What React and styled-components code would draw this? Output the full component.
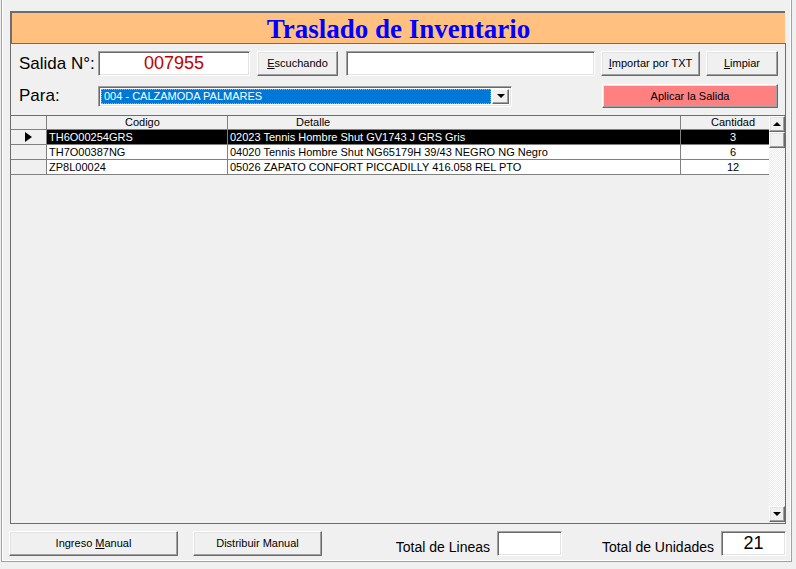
import React from 'react'
import styled, { createGlobalStyle } from 'styled-components'

// Estilos globales
const GlobalStyle = createGlobalStyle`
  html, body { margin: 0; padding: 0; background: #f0f0f0; }
  body { font-family: "Liberation Sans", Arial, sans-serif; }
  * { box-sizing: border-box; }
`

const Ventana = styled.div`
  width: 796px;
  height: 569px;
  overflow: hidden;
  background: #f0f0f0;
`

const Marco = styled.div`
  margin-left: 1px;
  width: 791px;
  height: 562px;
  border: 1px solid #a0a0a0;
  border-top: none;
  box-shadow: inset 1px 0 0 #fff, inset -1px -1px 0 #fff;
  padding: 11px 0 0 8px;
  display: flex;
  flex-direction: column;
`

const Titulo = styled.div`
  width: 775px;
  height: 32px;
  border-top: 2px solid #6d6d6d;
  border-left: 2px solid #6d6d6d;
  background: #ffc080;
  display: flex;
  align-items: center;
  justify-content: center;
  font-family: "Liberation Serif", "Times New Roman", serif;
  font-weight: bold;
  font-size: 27px;
  color: #0000ff;
  padding-top: 2px;
`

const Panel = styled.div`
  width: 776px;
  height: 481px;
  border: 1px solid #6d6d6d;
  display: flex;
  flex-direction: column;
  padding-top: 7px;
`

const Fila = styled.div`
  display: flex;
  align-items: center;
  height: ${(p) => p.alto}px;
  margin-top: ${(p) => p.arriba || 0}px;
  padding-left: 8px;
  padding-right: 6px;
`

const Etiqueta = styled.div`
  width: 79px;
  font-size: 17px;
  color: #000;
`

const Caja = styled.div`
  width: ${(p) => p.ancho}px;
  height: ${(p) => p.alto || 25}px;
  margin-left: ${(p) => p.izq || 0}px;
  background: #fff;
  border-top: 1px solid #a0a0a0;
  border-left: 1px solid #a0a0a0;
  border-right: 1px solid #fff;
  border-bottom: 1px solid #fff;
  box-shadow: inset 1px 1px 0 #696969, inset -1px -1px 0 #e3e3e3;
  display: flex;
  align-items: center;
  justify-content: center;
  font-size: ${(p) => p.letra || 18}px;
  color: ${(p) => p.color || '#000'};
`

const Boton = styled.div`
  width: ${(p) => p.ancho}px;
  height: ${(p) => p.alto || 25}px;
  margin-left: ${(p) => p.izq || 0}px;
  background: ${(p) => p.fondo || '#f0f0f0'};
  border-top: 1px solid #fff;
  border-left: 1px solid #fff;
  border-right: 1px solid #696969;
  border-bottom: 1px solid #696969;
  box-shadow: inset -1px -1px 0 #a0a0a0, inset 1px 1px 0 #e3e3e3;
  display: flex;
  align-items: center;
  justify-content: center;
  font-size: 11px;
  color: #000;
  padding-bottom: 1px;

  u { text-decoration: underline; text-underline-offset: 1px; }
`

const Combo = styled.div`
  width: 414px;
  height: 21px;
  background: #fff;
  border-top: 1px solid #a0a0a0;
  border-left: 1px solid #a0a0a0;
  border-right: 1px solid #fff;
  border-bottom: 1px solid #fff;
  box-shadow: inset 1px 1px 0 #696969, inset -1px -1px 0 #e3e3e3;
  display: flex;
  padding: 2px;
  gap: 1px;
`

const Seleccion = styled.div`
  flex: 1;
  background: #0078d7;
  border: 1px dotted #ff9c1c;
  color: #fff;
  font-size: 11px;
  line-height: 13px;
  padding-left: 2px;
  white-space: nowrap;
`

const BotonCombo = styled.div`
  width: 17px;
  background: #f0f0f0;
  border-top: 1px solid #fff;
  border-left: 1px solid #fff;
  border-right: 1px solid #696969;
  border-bottom: 1px solid #696969;
  box-shadow: inset -1px -1px 0 #a0a0a0;
  display: flex;
  align-items: center;
  justify-content: center;
`

const Flecha = styled.div`
  width: 0;
  height: 0;
  border-left: 4px solid transparent;
  border-right: 4px solid transparent;
  ${(p) =>
    p.arriba
      ? 'border-bottom: 4px solid #000;'
      : 'border-top: 4px solid #000;'}
`

const Rejilla = styled.div`
  flex: 1;
  margin-top: 7px;
  border-top: 1px solid #6d6d6d;
  display: flex;
  min-height: 0;
`

const Datos = styled.div`
  flex: 1;
  display: flex;
  flex-direction: column;
`

const FilaDato = styled.div`
  display: flex;
  height: ${(p) => (p.cabecera ? 14 : 15)}px;
`

const Celda = styled.div`
  width: ${(p) => p.ancho}px;
  height: 100%;
  border-right: ${(p) => (p.ultima ? 'none' : '1px solid #808080')};
  border-bottom: 1px solid #808080;
  background: ${(p) => (p.cabecera || p.fila ? '#f0f0f0' : p.activa ? '#000' : '#fff')};
  color: ${(p) => (p.activa && !p.fila ? '#fff' : '#000')};
  font-size: 11px;
  line-height: ${(p) => (p.cabecera ? 13 : 14)}px;
  white-space: nowrap;
  overflow: hidden;
  padding-left: ${(p) => p.pad || 2}px;
  display: flex;
  align-items: center;
`

const Texto = styled.span`
  display: block;
  width: 100%;
  text-align: ${(p) => p.alinear || 'left'};
`

const Barra = styled.div`
  width: 16px;
  display: flex;
  flex-direction: column;
  padding-bottom: 1px;
`

const BotonBarra = styled.div`
  height: 16px;
  background: #f0f0f0;
  border-top: 1px solid #fff;
  border-left: 1px solid #fff;
  border-right: 1px solid #696969;
  border-bottom: 1px solid #696969;
  box-shadow: inset -1px -1px 0 #a0a0a0, inset 1px 1px 0 #e3e3e3;
  display: flex;
  align-items: center;
  justify-content: center;
`

const Pista = styled.div`
  flex: 1;
  background-color: #f0f0f0;
  background-image: repeating-conic-gradient(#ffffff 0 25%, #ebebeb 0 50%);
  background-size: 2px 2px;
`

const PiePagina = styled.div`
  display: flex;
  align-items: center;
  height: 25px;
  margin-top: 7px;
  margin-left: -1px;
  width: 777px;
`

const Grupo = styled.div`
  width: ${(p) => p.ancho}px;
  display: flex;
  justify-content: flex-end;
  align-items: center;
  gap: 7px;
`

const EtiquetaPie = styled.div`
  font-size: 14px;
  color: #000;
  padding-top: 6px;
`

const filas = [
  { codigo: 'TH6O00254GRS', detalle: '02023 Tennis Hombre Shut GV1743 J GRS Gris', cantidad: '3', activa: true },
  { codigo: 'TH7O00387NG', detalle: '04020 Tennis Hombre Shut NG65179H 39/43 NEGRO NG Negro', cantidad: '6' },
  { codigo: 'ZP8L00024', detalle: '05026 ZAPATO CONFORT PICCADILLY 416.058 REL PTO', cantidad: '12' },
]

const Marcador = () => (
  <svg width="8" height="10" viewBox="0 0 8 10">
    <polygon points="0,0 7,5 0,10" fill="#000" />
  </svg>
)

const App = () => {
  return (
    <Ventana>
      <GlobalStyle />
      <Marco>
        <Titulo>Traslado de Inventario</Titulo>
        <Panel>
          <Fila alto={25}>
            <Etiqueta>Salida N°:</Etiqueta>
            <Caja ancho={152} color="#c00000">007955</Caja>
            <Boton ancho={81} izq={7}>
              <span><u>E</u>scuchando</span>
            </Boton>
            <Caja ancho={249} izq={8} />
            <Boton ancho={99} izq={6}>
              <span><u>I</u>mportar por TXT</span>
            </Boton>
            <Boton ancho={72} izq={6}>
              <span><u>L</u>impiar</span>
            </Boton>
          </Fila>
          <Fila alto={24} arriba={8}>
            <Etiqueta>Para:</Etiqueta>
            <Combo>
              <Seleccion>004 - CALZAMODA PALMARES</Seleccion>
              <BotonCombo>
                <Flecha />
              </BotonCombo>
            </Combo>
            <Boton ancho={176} alto={24} izq={90} fondo="#ff8080">
              Aplicar la Salida
            </Boton>
          </Fila>
          <Rejilla>
            <Datos>
              <FilaDato cabecera>
                <Celda cabecera ancho={36} />
                <Celda cabecera ancho={181} pad={78}>Codigo</Celda>
                <Celda cabecera ancho={453} pad={68}>Detalle</Celda>
                <Celda cabecera ancho={88} pad={30} ultima>Cantidad</Celda>
              </FilaDato>
              {filas.map((f) => (
                <FilaDato key={f.codigo}>
                  <Celda fila ancho={36} pad={14} activa={f.activa}>
                    {f.activa && <Marcador />}
                  </Celda>
                  <Celda ancho={181} activa={f.activa}>{f.codigo}</Celda>
                  <Celda ancho={453} activa={f.activa}>{f.detalle}</Celda>
                  <Celda ancho={88} pad={16} activa={f.activa} ultima>
                    <Texto alinear="center">{f.cantidad}</Texto>
                  </Celda>
                </FilaDato>
              ))}
            </Datos>
            <Barra>
              <BotonBarra>
                <Flecha arriba />
              </BotonBarra>
              <BotonBarra />
              <Pista />
              <BotonBarra>
                <Flecha />
              </BotonBarra>
            </Barra>
          </Rejilla>
        </Panel>
        <PiePagina>
          <Boton ancho={169}>
            <span>Ingreso <u>M</u>anual</span>
          </Boton>
          <Boton ancho={129} izq={15}>Distribuir Manual</Boton>
          <Grupo ancho={240}>
            <EtiquetaPie>Total de Lineas</EtiquetaPie>
            <Caja ancho={65} />
          </Grupo>
          <Grupo ancho={224}>
            <EtiquetaPie>Total de Unidades</EtiquetaPie>
            <Caja ancho={65} letra={18}>21</Caja>
          </Grupo>
        </PiePagina>
      </Marco>
    </Ventana>
  )
}

export default App
